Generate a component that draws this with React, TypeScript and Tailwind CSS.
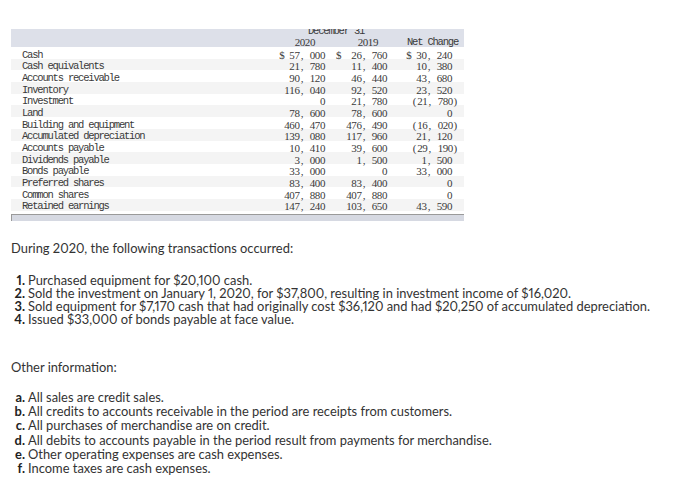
import React from "react";

const rows: [string, string, string, string][] = [
  ["Cash", "$ 57, 000", "$  26, 760", "$ 30, 240"],
  ["Cash equivalents", "21, 780", "11, 400", "10, 380"],
  ["Accounts receivable", "90, 120", "46, 440", "43, 680"],
  ["Inventory", "116, 040", "92, 520", "23, 520"],
  ["Investment", "0", "21, 780", "(21, 780)"],
  ["Land", "78, 600", "78, 600", "0"],
  ["Building and equipment", "460, 470", "476, 490", "(16, 020)"],
  ["Accumulated depreciation", "139, 080", "117, 960", "21, 120"],
  ["Accounts payable", "10, 410", "39, 600", "(29, 190)"],
  ["Dividends payable", "3, 000", "1, 500", "1, 500"],
  ["Bonds payable", "33, 000", "0", "33, 000"],
  ["Preferred shares", "83, 400", "83, 400", "0"],
  ["Common shares", "407, 880", "407, 880", "0"],
  ["Retained earnings", "147, 240", "103, 650", "43, 590"],
];

function Num({ v }: { v: string }) {
  return (
    <span className="font-['Liberation_Serif',serif] text-[11px] tracking-normal">
      {v.split("").map((c, i) => (
        <span key={i} className="inline-block w-[5.1px] text-center">
          {c === " " ? "\u00a0" : c}
        </span>
      ))}
    </span>
  );
}

function Net({ v }: { v: string }) {
  const paren = v.endsWith(")");
  return (
    <div className="w-[65px] text-right whitespace-pre">
      <span className={paren ? "mr-[-6px]" : ""}>
        <Num v={v} />
      </span>
    </div>
  );
}

const transactions = [
  ["1.", "Purchased equipment for $20,100 cash."],
  ["2.", "Sold the investment on January 1, 2020, for $37,800, resulting in investment income of $16,020."],
  ["3.", "Sold equipment for $7,170 cash that had originally cost $36,120 and had $20,250 of accumulated depreciation."],
  ["4.", "Issued $33,000 of bonds payable at face value."],
];

const other = [
  ["a.", "All sales are credit sales."],
  ["b.", "All credits to accounts receivable in the period are receipts from customers."],
  ["c.", "All purchases of merchandise are on credit."],
  ["d.", "All debits to accounts payable in the period result from payments for merchandise."],
  ["e.", "Other operating expenses are cash expenses."],
  ["f.", "Income taxes are cash expenses."],
];

export default function App() {
  return (
    <div className="w-[700px] h-[483px] bg-white overflow-hidden relative">
      <div className="pt-[29px] pl-[11px]">
        <div className="w-[453px] font-['Liberation_Mono',monospace] text-[10.5px] tracking-[-1.2px] text-[#3a3a3a]">
          <div className="h-[18px] bg-[#dde0e9] overflow-hidden flex flex-col leading-[10px]">
            <div className="h-[10px] shrink-0 mt-[-3px] pl-[297px] whitespace-pre">December 31</div>
            <div className="h-[10px] shrink-0 mt-[1px] flex whitespace-pre">
              <div className="w-[259px]"></div>
              <div className="w-[55px] text-right pr-[10px]"><Num v="2020" /></div>
              <div className="w-[62px] text-right pr-[9px]"><Num v="2019" /></div>
              <div className="w-[71px] text-right">Net Change</div>
            </div>
          </div>
          {rows.map((r, i) => (
            <div
              key={r[0]}
              className={`h-[11.7px] leading-[11.7px] pt-[2.5px] flex whitespace-pre ${i % 2 === 1 ? "bg-[#f4f4f4]" : "bg-white"}`}
            >
              <div className="w-[259px] pl-[11px]">{r[0]}</div>
              <div className="w-[55px] text-right"><Num v={r[1]} /></div>
              <div className="w-[62px] text-right"><Num v={r[2]} /></div>
              <Net v={r[3]} />
            </div>
          ))}
          <div className="mt-[3px] h-[7px] bg-[#d6d9e2] border-t border-l border-[#9a9a9a]"></div>
        </div>
      </div>

      <div className="font-['Lato',sans-serif] text-[12.9px] proportional-nums text-[#333] pl-[11px] mt-[19px]">
        <p className="leading-[16px]">During 2020, the following transactions occurred:</p>
        <div className="mt-[18px] leading-[13px]">
          {transactions.map(([n, t]) => (
            <div key={n} className="flex">
              <span className="w-[14px] text-right font-bold text-[#222]">{n}</span>
              <span className="ml-[3px]">{t}</span>
            </div>
          ))}
        </div>
        <p className="mt-[33px] leading-[16px]">Other information:</p>
        <div className="mt-[15px] leading-[14.3px]">
          {other.map(([n, t]) => (
            <div key={n} className="flex">
              <span className="w-[14px] text-right font-bold text-[#222]">{n}</span>
              <span className="ml-[3px]">{t}</span>
            </div>
          ))}
        </div>
      </div>
    </div>
  );
}
